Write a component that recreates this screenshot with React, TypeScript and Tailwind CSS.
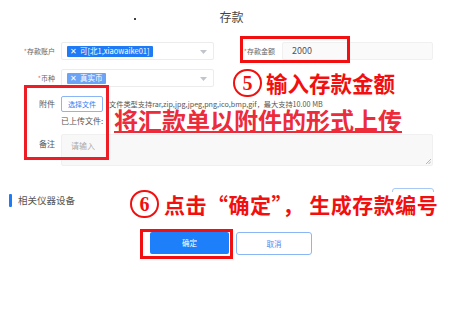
const font = { fontFamily: '"Noto Sans CJK SC", "Noto Sans", sans-serif' };

const Caret = () => (
  <svg width="7" height="4" viewBox="0 0 7 4" className="absolute right-[6px] top-[7px]">
    <path d="M0 0 L7 0 L3.5 4 Z" fill="#c0c4cc" />
  </svg>
);

const Tag = ({ text, light }: { text: string; light?: boolean }) => (
  <span
    className={
      "flex items-center h-[11px] px-[3px] gap-[3px] rounded-[1px] text-white text-[7.5px] leading-none " +
      (light ? "bg-[#6ba4f7]" : "bg-[#1f7af5]")
    }
  >
    <span className="text-[7.5px]">✕</span>
    {text}
  </span>
);

const Circle = ({ n }: { n: string }) => (
  <span className="flex items-center justify-center w-[29px] h-[28px] rounded-full border-[2.5px] border-[#f20f0f] text-[#f20f0f] text-[20px] font-bold leading-none font-['Liberation_Serif',serif]">
    {n}
  </span>
);

export default function App() {
  return (
    <div className="relative w-[457px] h-[315px] bg-white overflow-hidden text-[#333]" style={font}>
      <div className="relative h-[36px] pt-[9px] pl-[6px] text-center text-[12px] leading-[16px] text-[#444]">
        存款
        <span className="absolute left-[134px] top-[18px] w-[2px] h-[2px] bg-black rounded-full" />
      </div>

      {/* row 1 */}
      <div className="flex items-center h-[18px] mt-[6px]">
        <div className="w-[55px] text-right text-[7px] text-[#666]">
          <span className="text-[#f56c6c]">*</span>存款账户
        </div>
        <div className="relative ml-[6px] w-[153px] h-[18px] border border-[#ececec] rounded-[2px] flex items-center pl-[5px]">
          <Tag text="可[北1,xiaowaike01]" />
          <Caret />
        </div>
        <div className="w-[61px] text-right text-[7px] text-[#666]">
          <span className="text-[#f56c6c]">*</span>存款金额
        </div>
        <div className="ml-[7px] w-[151px] h-[18px] border border-[#f0f0f0] bg-[#fafafa] rounded-[2px] flex items-center pl-[9px] text-[9px] text-[#555]">
          2000
        </div>
      </div>

      {/* row 2 */}
      <div className="flex items-center h-[18px] mt-[9px]">
        <div className="w-[55px] text-right text-[7px] text-[#666]">
          <span className="text-[#f56c6c]">*</span>币种
        </div>
        <div className="relative ml-[6px] w-[153px] h-[18px] border border-[#ececec] rounded-[2px] flex items-center pl-[5px]">
          <Tag text="真实币" light />
          <Caret />
        </div>
      </div>

      {/* attachment */}
      <div className="flex items-center h-[16px] mt-[9px]">
        <div className="w-[55px] text-right text-[8px] text-[#555]">附件</div>
        <button className="ml-[6px] w-[42px] h-[16px] border border-[#8ab6f5] rounded-[2px] bg-white text-[7px] text-[#2f7ef5]">
          选择文件
        </button>
        <span className="ml-[6px] text-[7.2px] text-[#555] whitespace-nowrap">
          文件类型支持rar,zip,jpg,jpeg,png,ico,bmp,gif，最大支持10.00 MB
        </span>
      </div>
      <div className="h-[10px] mt-[4px] ml-[61px] text-[8px] leading-[10px] text-[#555]">已上传文件:</div>

      {/* remark */}
      <div className="flex mt-[8px]">
        <div className="w-[55px] pt-[4px] text-right text-[8px] text-[#555]">备注</div>
        <div className="relative ml-[6px] w-[372px] h-[32px] border border-[#f0f0f0] bg-[#f8f8f8] rounded-[2px] pl-[9px] pt-[5px] text-[8px] text-[#aaa]">
          请输入
          <svg width="5" height="5" viewBox="0 0 5 5" className="absolute right-[1px] bottom-[1px]">
            <path d="M5 0 L0 5 M5 2.5 L2.5 5" stroke="#999" strokeWidth="0.7" />
          </svg>
        </div>
      </div>

      {/* section */}
      <div className="flex items-start justify-between mt-[22px] pl-[9px] pr-[23px]">
        <div className="flex items-center mt-[5px]">
          <span className="w-[3px] h-[13px] bg-[#1f7af5] rounded-[1px]" />
          <span className="ml-[6px] text-[9.5px] text-[#555]">相关仪器设备</span>
        </div>
        <span className="w-[42px] h-[22px] border border-[#a8c8f5] rounded-[3px]" />
      </div>

      {/* buttons */}
      <div className="flex justify-center gap-[7px] mt-[22px] pl-[5px]">
        <button className="w-[79px] h-[22px] rounded-[2px] bg-[#1e7ffa] text-white text-[7.5px]">确定</button>
        <button className="w-[76px] h-[23px] rounded-[3px] border border-[#8ab6f5] bg-white text-[#4a8cf0] text-[7.5px]">
          取消
        </button>
      </div>

      {/* annotations */}
      <div className="absolute left-[240px] top-[36px] w-[110px] h-[27px] border-[3px] border-[#f20f0f]" />
      <div className="absolute left-[24px] top-[85px] w-[85px] h-[75px] border-[3px] border-[#ee1c25]" />
      <div className="absolute left-[140px] top-[229px] w-[93px] h-[30px] border-[3px] border-[#f20f0f]" />

      <div className="absolute left-[233px] top-[69px] flex items-center gap-[4px]">
        <Circle n="5" />
        <span className="text-[21.5px] font-bold leading-none text-[#f20f0f]">输入存款金额</span>
      </div>

      <div className="absolute left-[114px] top-[106px] text-[24px] font-bold leading-[27px] text-[#ec2b3b] underline decoration-[2px] underline-offset-[1px] whitespace-nowrap">
        将汇款单以附件的形式上传
      </div>

      <div className="absolute left-[130px] top-[190px] flex items-center gap-[5px]">
        <Circle n="6" />
        <span className="bg-white text-[21px] font-bold leading-[24px] text-[#f20f0f] whitespace-nowrap tracking-[0.5px]">
          点击“确定”， 生成存款编号
        </span>
      </div>
    </div>
  );
}
